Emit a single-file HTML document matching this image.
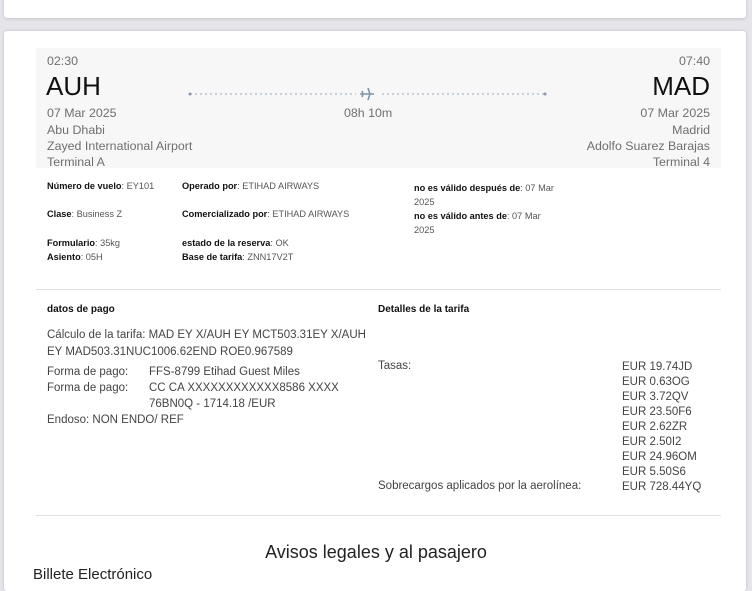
<!DOCTYPE html>
<html><head><meta charset="utf-8"><style>
*{margin:0;padding:0;box-sizing:border-box}
body{width:752px;height:580px;overflow:hidden;background:#e6e5ea;font-family:"Liberation Sans",Arial,sans-serif;position:relative;color:#222}
.a{position:absolute;white-space:nowrap}
.card1{position:absolute;left:4px;top:-10px;width:742px;height:28px;background:#fff;border-radius:3px;box-shadow:0 1px 3px rgba(0,0,0,.15)}
.card2{position:absolute;left:4px;top:31px;width:742px;height:560px;background:#fff;border-radius:3px;box-shadow:0 0 3px rgba(0,0,0,.18)}
.box{position:absolute;left:36px;top:48px;width:685px;height:120px;background:#f7f7f8}
.g{color:#6f6f6f;font-size:12.4px}
.r{text-align:right}
.d{font-size:9.2px;color:#555}
.d b{color:#111;font-weight:bold}
.p{font-size:11.5px;color:#444}
.h{font-size:10px;font-weight:bold;color:#111}
.hr{position:absolute;left:36px;width:685px;height:1px;background:#e2e2e2}
</style></head><body>
<div class="card1"></div>
<div class="card2"></div>
<div class="box"></div>
<div class="a g" style="left:47px;top:54px">02:30</div>
<div class="a g r" style="right:42px;top:54px">07:40</div>
<div class="a" style="left:46px;top:71px;font-size:26px;color:#111">AUH</div>
<div class="a r" style="right:42px;top:71px;font-size:26px;color:#111">MAD</div>
<svg class="a" style="left:186px;top:86px" width="364" height="16"><line x1="4" y1="8" x2="170" y2="8" stroke="#9ab" stroke-width="1" stroke-dasharray="2,3"/><line x1="196" y1="8" x2="358" y2="8" stroke="#9ab" stroke-width="1" stroke-dasharray="2,3"/><circle cx="4" cy="8" r="1.5" fill="#8a9aa8"/><circle cx="359" cy="8" r="1.5" fill="#8a9aa8"/><path d="M174 8h14M182 2l2 6-2 6M176 5l1 3-1 3" stroke="#7f96a8" stroke-width="1.6" fill="none"/></svg>
<div class="a g" style="left:344px;top:106px">08h 10m</div>
<div class="a g" style="left:47px;top:106px">07 Mar 2025</div>
<div class="a g r" style="right:42px;top:106px">07 Mar 2025</div>
<div class="a g" style="left:47px;top:123px">Abu Dhabi</div>
<div class="a g r" style="right:42px;top:123px">Madrid</div>
<div class="a g" style="left:47px;top:139px">Zayed International Airport</div>
<div class="a g r" style="right:42px;top:139px">Adolfo Suarez Barajas</div>
<div class="a g" style="left:47px;top:155px">Terminal A</div>
<div class="a g r" style="right:42px;top:155px">Terminal 4</div>

<div class="a d" style="left:47px;top:181px"><b>Número de vuelo</b>: EY101</div>
<div class="a d" style="left:182px;top:181px"><b>Operado por</b>: ETIHAD AIRWAYS</div>
<div class="a d" style="left:414px;top:181px;line-height:14px"><b>no es válido después de</b>: 07 Mar<br>2025</div>
<div class="a d" style="left:47px;top:209px"><b>Clase</b>: Business Z</div>
<div class="a d" style="left:182px;top:209px"><b>Comercializado por</b>: ETIHAD AIRWAYS</div>
<div class="a d" style="left:414px;top:209px;line-height:14px"><b>no es válido antes de</b>: 07 Mar<br>2025</div>
<div class="a d" style="left:47px;top:236px;line-height:14px"><b>Formulario</b>: 35kg<br><b>Asiento</b>: 05H</div>
<div class="a d" style="left:182px;top:236px;line-height:14px"><b>estado de la reserva</b>: OK<br><b>Base de tarifa</b>: ZNN17V2T</div>

<div class="hr" style="top:289px"></div>
<div class="a h" style="left:47px;top:304px">datos de pago</div>
<div class="a h" style="left:378px;top:304px">Detalles de la tarifa</div>
<div class="a p" style="left:47px;top:327px;line-height:17px">Cálculo de la tarifa: MAD EY X/AUH EY MCT503.31EY X/AUH<br>EY MAD503.31NUC1006.62END ROE0.967589</div>
<div class="a p" style="left:47px;top:364px;line-height:16px">Forma de pago:<br>Forma de pago:<br><br>Endoso: NON ENDO/ REF</div>
<div class="a p" style="left:149px;top:364px;line-height:16px">FFS-8799 Etihad Guest Miles<br>CC CA XXXXXXXXXXXX8586 XXXX<br>76BN0Q - 1714.18 /EUR</div>
<div class="a p" style="left:378px;top:360px">Tasas:</div>
<div class="a p" style="left:622px;top:360px;line-height:15px">EUR 19.74JD<br>EUR 0.63OG<br>EUR 3.72QV<br>EUR 23.50F6<br>EUR 2.62ZR<br>EUR 2.50I2<br>EUR 24.96OM<br>EUR 5.50S6<br>EUR 728.44YQ</div>
<div class="a p" style="left:378px;top:480px">Sobrecargos aplicados por la aerolínea:</div>
<div class="hr" style="top:515px"></div>
<div class="a" style="left:0;width:752px;text-align:center;top:542px;font-size:18px;color:#222">Avisos legales y al pasajero</div>
<div class="a" style="left:33px;top:566px;font-size:15px;color:#222">Billete Electrónico</div>
</body></html>
